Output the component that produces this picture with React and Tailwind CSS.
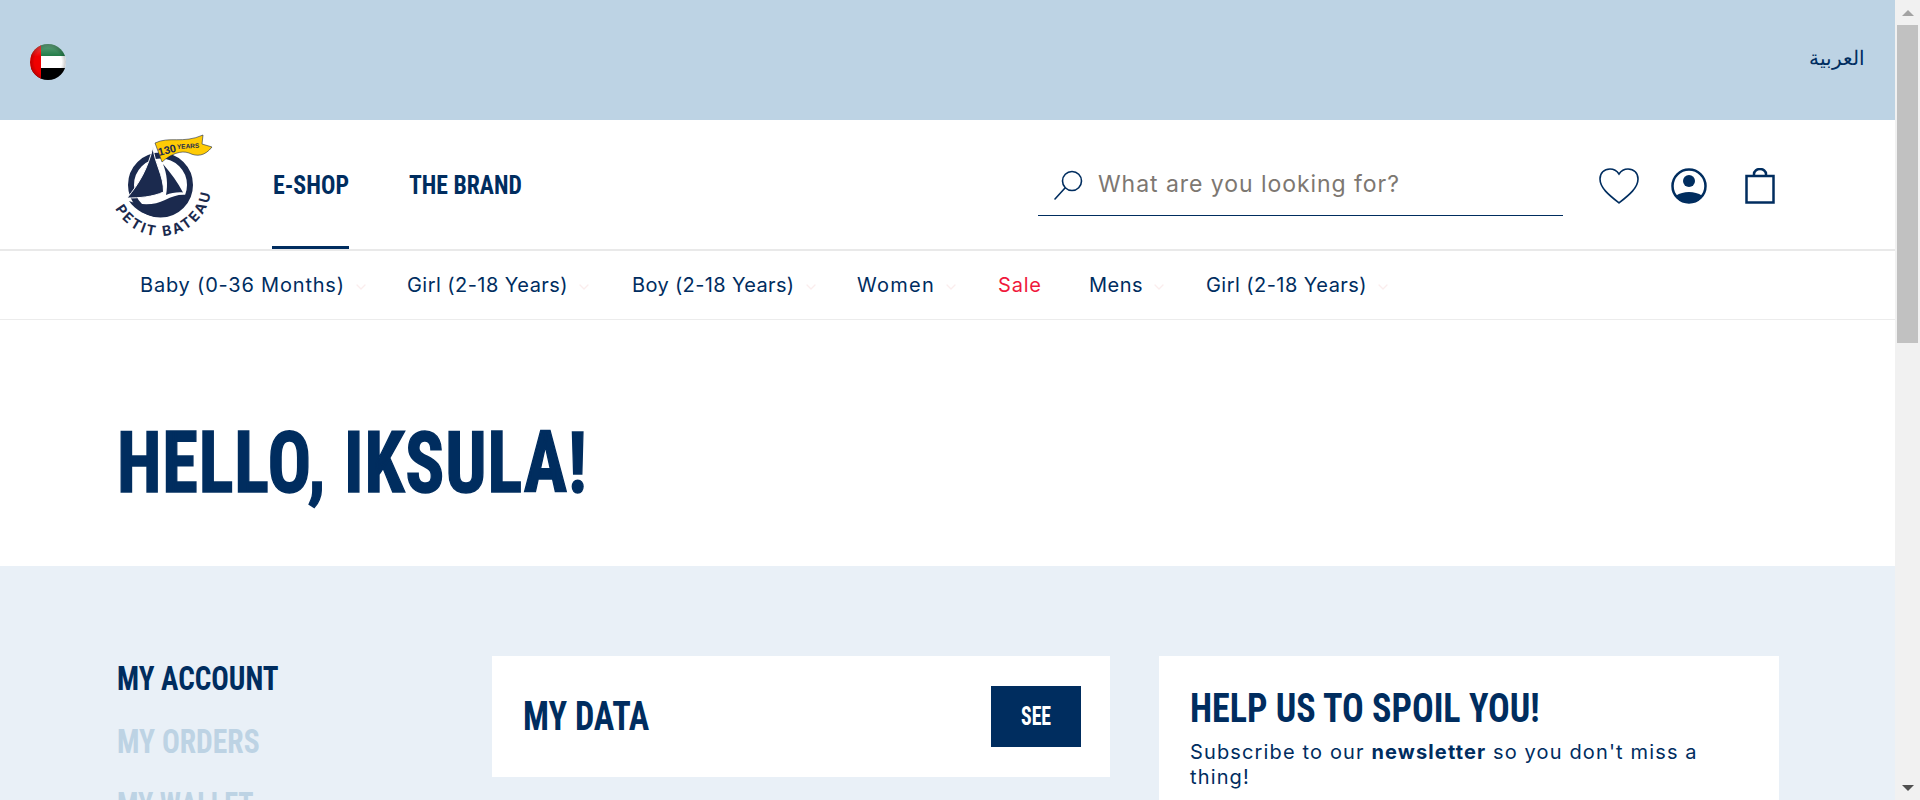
import React from 'react'
import { ChevronDown } from 'lucide-react'

const heading = "font-['Liberation_Sans_Narrow','Roboto_Condensed','Liberation_Sans',sans-serif] font-bold"
const squeeze = 'inline-block whitespace-nowrap'
const navItems = [
  { label: 'Baby (0-36 Months)', cls: 'w-[267px] text-[#002d5f] tracking-[0.8px]' },
  { label: 'Girl (2-18 Years)', cls: 'w-[225px] text-[#002d5f] tracking-[0.45px]' },
  { label: 'Boy (2-18 Years)', cls: 'w-[225px] text-[#002d5f] tracking-[0.35px]' },
  { label: 'Women', cls: 'w-[141px] text-[#002d5f] tracking-[1.3px]' },
  { label: 'Sale', cls: 'w-[91px] text-[#f0183c] tracking-[0.8px]', plain: true },
  { label: 'Mens', cls: 'w-[117px] text-[#002d5f] tracking-[0.5px]' },
  { label: 'Girl (2-18 Years)', cls: 'text-[#002d5f] tracking-[0.45px]' },
]

function Flag() {
  return (
    <svg width="36" height="36" viewBox="0 0 36 36">
      <defs>
        <clipPath id="flagClip"><circle cx="18" cy="18" r="18" /></clipPath>
        <linearGradient id="flagGloss" x1="0" y1="0" x2="0" y2="1">
          <stop offset="0%" stopColor="#fff" stopOpacity="0.3" />
          <stop offset="35%" stopColor="#fff" stopOpacity="0" />
          <stop offset="100%" stopColor="#000" stopOpacity="0" />
        </linearGradient>
        <radialGradient id="flagShade" cx="50%" cy="50%" r="50%">
          <stop offset="75%" stopColor="#000" stopOpacity="0" />
          <stop offset="100%" stopColor="#000" stopOpacity="0.22" />
        </radialGradient>
      </defs>
      <g clipPath="url(#flagClip)">
        <rect width="36" height="12" fill="#1f7a45" />
        <rect y="12" width="36" height="12" fill="#fff" />
        <rect y="24" width="36" height="12" fill="#000" />
        <rect width="11" height="36" fill="#f00000" />
        <rect width="36" height="36" fill="url(#flagGloss)" />
        <circle cx="18" cy="18" r="18" fill="url(#flagShade)" />
      </g>
    </svg>
  )
}

function Logo() {
  return (
    <svg className="overflow-visible" width="100" height="112" viewBox="0 0 100 112">
      <defs>
        <path id="logoArc" d="M-1.7 76.6 A 51 51 0 0 0 94.3 58" />
      </defs>
      <circle cx="43.5" cy="53" r="29.5" fill="none" stroke="#1b2a4e" strokeWidth="6" />
      <path d="M36 15 C 37 30 47 44 46.5 60 C 36 65 22 66 10 66 C 22 52 31 36 36 15 Z" fill="#1b2a4e" stroke="#fff" strokeWidth="1" />
      <path d="M46 32 C 54 41 61 51 66 60.5 C 60 60 54 61 49 63 C 51 52 50 42 46 32 Z" fill="#1b2a4e" />
      <path d="M12 69 C 25 74 38 73 48 68 C 56 64 62 62 71 63 C 68 76 55 85 43.5 85 C 30 85 18 78 12 69 Z" fill="#1b2a4e" />
      <path d="M38 11 C 52 4 66 12 86 3 L 85 12 L 95 15 C 88 24 80 25 72 21 C 64 18 54 22 45 30 Z" fill="#ffcb05" stroke="#1b2a4e" strokeWidth="0.6" />
      <text x="42" y="24" transform="rotate(-14 42 24)" fontSize="11" fontWeight="700" fill="#1b2a4e" className="font-['Liberation_Sans']">130</text>
      <text x="60" y="17" transform="rotate(-3 60 17)" fontSize="6.5" fontWeight="700" fill="#1b2a4e" className="font-['Liberation_Sans']">YEARS</text>
      <text fontSize="14" fontWeight="700" letterSpacing="2.4" fill="#1b2a4e" className="font-['Inter']">
        <textPath href="#logoArc">PETIT BATEAU</textPath>
      </text>
    </svg>
  )
}

function Scrollbar() {
  return (
    <div className="w-[25px] shrink-0 h-full bg-[#f1f1f1] flex flex-col items-center">
      <div className="h-[25px] flex items-center justify-center">
        <div className="w-0 h-0 border-x-[6px] border-x-transparent border-b-[6px] border-b-[#a3a3a3]" />
      </div>
      <div className="w-[21px] h-[318px] bg-[#c1c1c1]" />
      <div className="flex-1" />
      <div className="h-[25px] flex items-center justify-center">
        <div className="w-0 h-0 border-x-[6px] border-x-transparent border-t-[6px] border-t-[#505050]" />
      </div>
    </div>
  )
}

export default function App() {
  return (
    <div className="h-screen flex overflow-hidden bg-white font-['Inter',sans-serif] text-[#002d5f]">
      <div className="flex-1 min-w-0">
        {/* Top bar */}
        <div className="h-[120px] bg-[#bdd3e4] flex items-start justify-between pl-[30px] pr-[30px] pt-[44px]">
          <Flag />
          <span dir="rtl" className="text-[20px] leading-[28px] font-['Liberation_Serif',serif]">العربية</span>
        </div>

        {/* Header */}
        <div className="h-[131px] border-b-2 border-[#e9e9e9] flex pl-[117px] pr-[120px]">
          <div className="w-[155px] pt-[12px]"><Logo /></div>
          <div className="flex gap-[60px]">
            <a className={`${heading} h-full border-b-[3px] border-[#002d5f] pl-[1px] pt-[46px] text-[26px] w-[77px]`}>
              <span className={`${squeeze} origin-left scale-x-[.92]`}>E-SHOP</span>
            </a>
            <a className={`${heading} pt-[46px] text-[26px]`}>
              <span className={`${squeeze} origin-left scale-x-[.91]`}>THE BRAND</span>
            </a>
          </div>
          <div className="flex-1" />
          <div className="w-[525px] h-[96px] border-b border-[#002d5f] flex items-center pl-[15px] gap-[15px] self-start pt-[44px] pb-[10px]">
            <svg width="30" height="30" viewBox="0 0 30 30" fill="none" stroke="#002d5f" strokeWidth="1.6">
              <circle cx="19" cy="11" r="9.5" />
              <path d="M12 18 L2 29" strokeLinecap="round" />
            </svg>
            <span className="text-[23px] text-[#7d7771] tracking-[0.95px]">What are you looking for?</span>
          </div>
          <div className="flex items-start gap-[32px] pl-[36px] pt-[48px]">
            <svg width="40" height="36" viewBox="0 0 40 36" fill="none" stroke="#002d5f" strokeWidth="1.6">
              <path d="M20 35 C 10 27 1 20 1 11 C 1 5 5 1 11 1 C 15 1 18 3 20 6 C 22 3 25 1 29 1 C 35 1 39 5 39 11 C 39 20 30 27 20 35 Z" />
            </svg>
            <svg width="36" height="36" viewBox="0 0 36 36">
              <circle cx="18" cy="18" r="16.5" fill="none" stroke="#002d5f" strokeWidth="2.5" />
              <circle cx="18" cy="13" r="6" fill="#002d5f" />
              <path d="M4.5 28 C 9 25 13 24 18 24 C 23 24 27 25 31.5 28 C 28 33 23 35 18 35 C 13 35 8 33 4.5 28 Z" fill="#002d5f" />
            </svg>
            <svg className="ml-[6px]" width="30" height="36" viewBox="0 0 30 36" fill="none" stroke="#002d5f" strokeWidth="2.5">
              <rect x="1.5" y="8" width="27" height="26.5" />
              <path d="M9 8 V6 A 6 5 0 0 1 21 6 V8" />
            </svg>
          </div>
        </div>

        {/* Category nav */}
        <div className="h-[69px] border-b border-[#ececec] flex items-center pl-[140px] text-[20px]">
          {navItems.map((item, i) => (
            <div key={i} className={`${item.cls} flex items-center whitespace-nowrap`}>
              <span>{item.label}</span>
              {!item.plain && <ChevronDown size={16} className="ml-[8px] mt-[4px] text-[#fbeded]" />}
            </div>
          ))}
        </div>

        {/* Hello */}
        <div className="h-[246px] pl-[117px] pt-[98px]">
          <h1 className={`${heading} text-[86px] leading-[90px] tracking-[1px] [-webkit-text-stroke:1.5px_#002d5f]`}>
            <span className={`${squeeze} origin-left scale-x-[.843]`}>HELLO, IKSULA!</span>
          </h1>
        </div>

        {/* Account */}
        <div className="h-[234px] bg-[#e9f0f7] flex pl-[117px] pr-[116px] pt-[90px] overflow-hidden">
          <div className={`${heading} w-[375px] shrink-0 text-[34px] leading-[63px] text-[#bdd3e4] mt-[-9px]`}>
            <div className="text-[#002d5f]"><span className={`${squeeze} origin-left scale-x-[.855]`}>MY ACCOUNT</span></div>
            <div><span className={`${squeeze} origin-left scale-x-[.87]`}>MY ORDERS</span></div>
            <div><span className={`${squeeze} origin-left scale-x-[.83]`}>MY WALLET</span></div>
          </div>
          <div className="w-[618px] h-[121px] shrink-0 bg-white flex items-center justify-between pl-[31px] pr-[29px]">
            <span className={`${heading} text-[40px]`}>
              <span className={`${squeeze} origin-left scale-x-[.855]`}>MY DATA</span>
            </span>
            <button className={`${heading} w-[90px] h-[61px] bg-[#002d5f] text-white text-[25px]`}>
              <span className={`${squeeze} origin-center scale-x-[.79]`}>SEE</span>
            </button>
          </div>
          <div className="ml-[49px] flex-1 bg-white pl-[31px] pr-[60px] pt-[30px] h-[200px]">
            <h2 className={`${heading} text-[40px] leading-[46px]`}>
              <span className={`${squeeze} origin-left scale-x-[.9]`}>HELP US TO SPOIL YOU!</span>
            </h2>
            <p className="mt-[8px] text-[20px] leading-[25px] tracking-[1.14px]">
              Subscribe to our <b>newsletter</b> so you don't miss a thing!
            </p>
          </div>
        </div>
      </div>
      <Scrollbar />
    </div>
  )
}
